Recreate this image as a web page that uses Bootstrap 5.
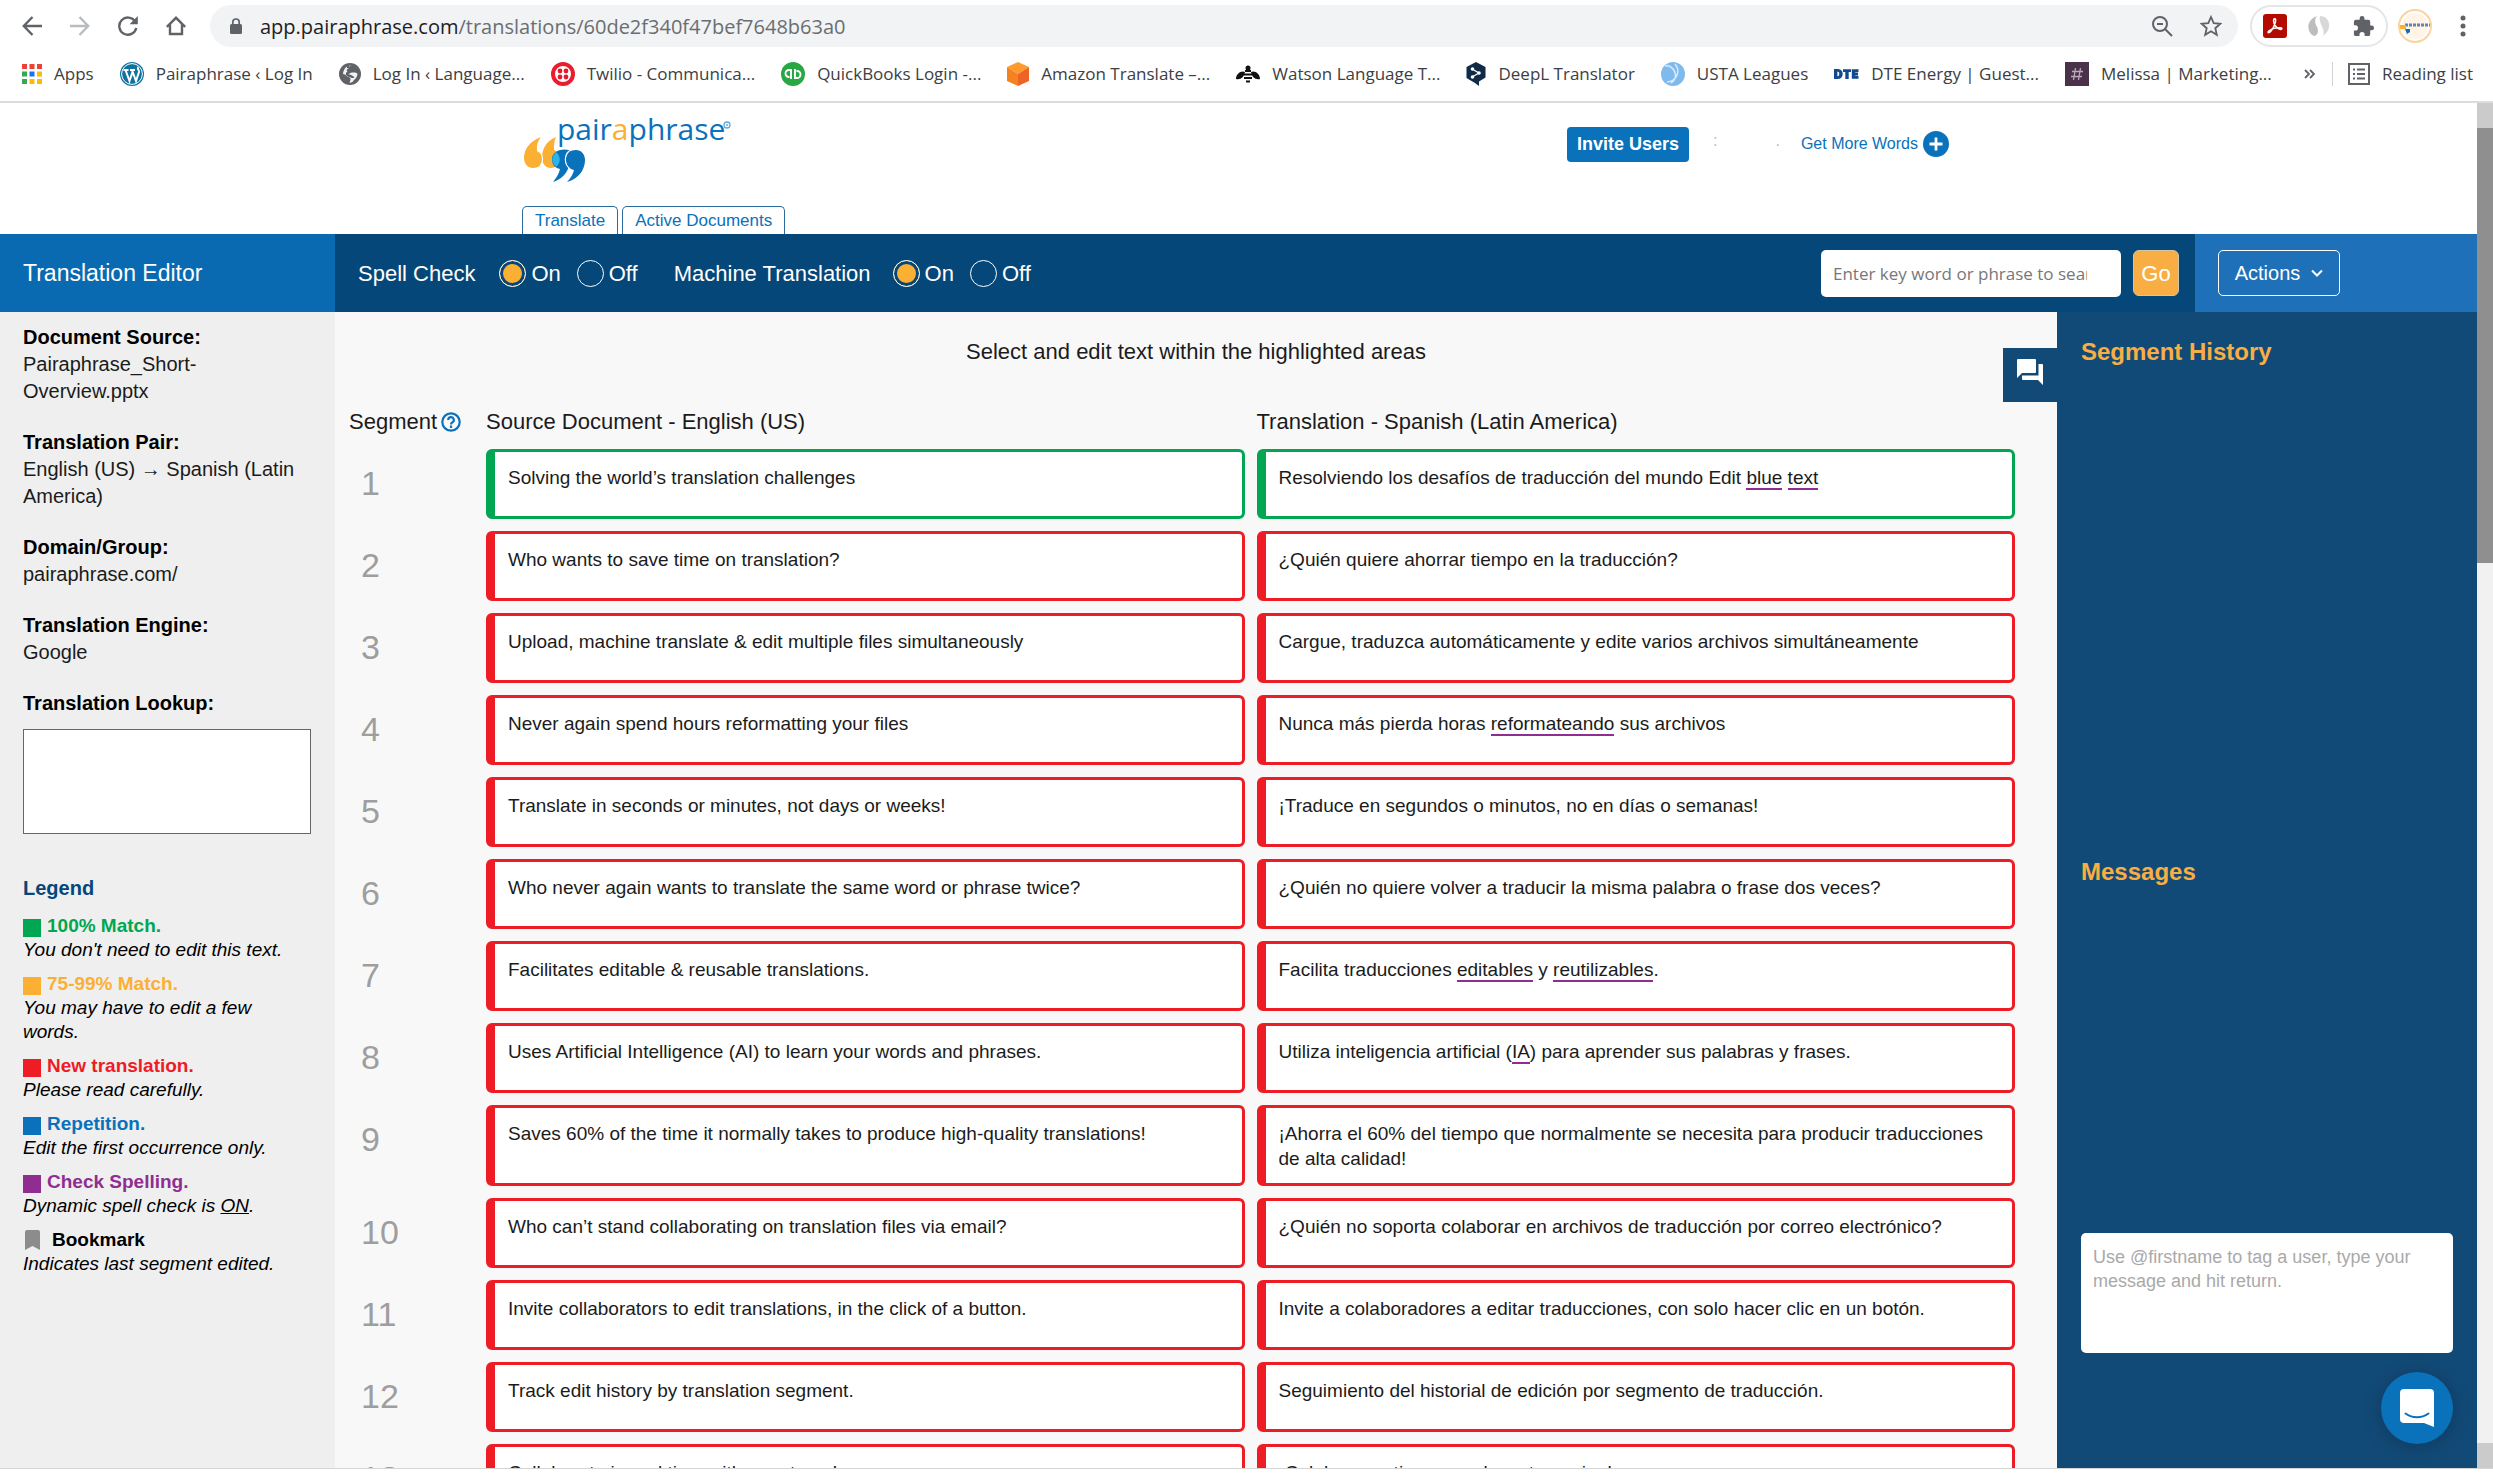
<!DOCTYPE html>
<html lang="en">
<head>
<meta charset="utf-8">
<meta name="viewport" content="width=device-width, initial-scale=1">
<title>Translation Editor</title>
<link href="https://cdn.jsdelivr.net/npm/bootstrap@5.3.0/dist/css/bootstrap.min.css" rel="stylesheet">
<style>
:root{--pp-blue:#0a71bb;--pp-navy:#054778;--pp-panel:#124a77;--pp-gold:#f9ae43;--pp-green:#00a651;--pp-red:#ee1c25;--pp-purple:#902d91}
body{height:100vh;overflow:hidden;font-family:"Liberation Sans",Arial,sans-serif;color:#1b1b1b;font-size:20px;line-height:27px;background:#fff}
a{text-decoration:none}
svg{display:block;flex:none}
/* browser frame */
.browser-ui{font-family:"Open Sans","Noto Sans",sans-serif;color:#3c4043;border-bottom:2px solid #dadce0}
.tool-row{height:52px;padding:0 27px 0 22px}
.nav-icons{gap:28px;width:188px}
.icon-btn{background:none;border:0;padding:0;color:#5f6368}
.omnibox{height:42px;border-radius:21px;background:#f1f3f4;padding:0 16px 0 20px}
.url-text{font-size:20px;color:#6a6e72;margin-left:18px}
.url-text b{font-weight:400;color:#202124}
.zoom-btn{margin-right:27px}
.ext-pill{height:42px;width:138px;border:2px solid #e3e5e8;border-radius:21px;margin-left:12px}
.book-row{height:49px;padding:0 20px 6px 22px;font-size:17px;line-height:24px}
.book-row a{color:#3c4043;gap:12px;white-space:nowrap}
.book-list{gap:26px}
.book-end{border-left:1px solid #cfd1d4;height:24px;padding-left:15px;margin-left:17px}
/* site header */
.site-head{height:131px}
.head-inner{width:58%;max-width:1433px}
.logo-box{height:103px;padding:6px 0 0 2px}
.brand-word{font-family:"Open Sans","Noto Sans",sans-serif;font-size:30px}
.tab-link{border:1px solid #2a6c9c;border-bottom-color:#8c8c8c;border-radius:5px 5px 0 0;color:var(--pp-blue);font-size:17px;line-height:27px;height:29px;padding:0 12px;background:#fff}
.head-tools{padding:24px 6px 0 0}
.invite-btn{background:var(--pp-blue);color:#fff;font-weight:700;font-size:18px;line-height:35px;height:35px;padding:0 10px;border:0;border-radius:4px}
.faint-mark{color:#9cc3df;font-size:16px}
.faint-mark+.faint-mark{margin-left:58px}
.words-link{color:var(--pp-blue);font-size:16px;gap:5px;margin:3px 0 0 21px}
/* title bar */
.title-bar{height:78px;background:var(--pp-navy);color:#fff}
.side-w{width:335px;flex:none}
.bar-title{background:#0a6ab1;font-size:23px;padding-left:23px}
.bar-controls{font-size:22px;padding:0 16px 0 23px}
.bar-controls label{margin-right:16px}
.mt-label{margin:0 22px 0 20px}
.radio-dot{appearance:none;width:27px;height:27px;border:1px solid #fff;border-radius:50%;margin:0 5px 0 0;background:var(--pp-navy)}
.radio-dot:checked{background:#fbb034;box-shadow:inset 0 0 0 3px var(--pp-navy)}
.search-box{width:300px;height:47px;border:0;border-radius:5px;background:#fff;padding:0 34px 0 12px;font:17px "Open Sans",sans-serif;color:#555}
.search-box::placeholder{color:#777}
.go-btn{width:46px;height:46px;border:1px solid #d5c4a8;border-radius:6px;background:#f9ae43;color:#fff;font-size:22px;padding:0;margin-left:12px}
.bar-actions{width:282px;background:#1e70b9;padding-left:23px;flex:none}
.action-btn{width:122px;height:46px;border:1px solid #fff;border-radius:5px;background:none;color:#fff;font-size:20px;padding:0;gap:11px}
/* sidebar */
.info-side{background:#efefef;padding:12px 24px 0 23px}
.info-side h2{font-size:20px;line-height:27px;font-weight:700;margin:0;color:#000}
.info-side h2.legend-title{color:var(--pp-navy);margin-top:41px}
.info-side dl,.info-side dd{margin:0}
.info-side dt{color:#000;font-weight:700}
.info-side dd{margin-bottom:24px}
.lookup-box{width:100%;height:105px;border:1px solid #666;background:#fff;margin-top:12px;resize:none;display:block}
.legend-list{font-size:19px;line-height:24px;color:#000;margin:12px 0 0}
.legend-list li{margin-bottom:10px}
.legend-list strong{display:flex;align-items:center;gap:6px}
.swatch{width:18px;height:18px;margin-top:4px;background:currentColor}
.tone-match{color:var(--pp-green)}
.tone-fuzzy{color:#fbb034}
.tone-new{color:var(--pp-red)}
.tone-repeat{color:var(--pp-blue)}
.tone-spell{color:var(--pp-purple)}
/* segments */
.edit-main{background:#f8f8f8;padding:26px 42px 0 0}
.hint-line{font-size:22px;padding-left:42px}
.seg-head{font-size:22px;margin-top:43px;margin-bottom:14px}
.seg-num{width:151px;flex:none;padding-left:26px;font-size:34px;line-height:68px;color:#9e9e9e}
.seg-head .seg-num{font-size:22px;line-height:27px;padding-left:14px;color:inherit}
.seg-cols{gap:12px}
.seg-cols>*{flex:1 1 0;min-width:0}
.seg-row{margin-bottom:12px}
.seg-cell{min-height:70px;border:3px solid var(--pp-red);border-left-width:9px;border-radius:6px;background:#fff;padding:13px 12px 12px 13px;font-size:19px;line-height:25px}
.seg-good .seg-cell{border-color:var(--pp-green)}
.misspelt{border-bottom:2px solid var(--pp-purple)}
.chat-tab{top:36px;right:0;width:54px;height:54px;background:var(--pp-panel);border:0;padding:0 14px 6px}
/* right panel */
.msg-panel{width:420px;flex:none;background:var(--pp-panel);padding:26px 24px 0}
.msg-panel h2{font-size:24px;line-height:28px;font-weight:700;color:#f9ae43;margin:0}
.hist-area{height:520px;flex:none}
.msg-area{height:375px;flex:none}
.msg-box{height:120px;border:0;border-radius:5px;padding:12px;font-size:18px;line-height:24px;resize:none;display:block}
.msg-box::placeholder{color:#a9a9a9}
.help-fab{right:24px;bottom:24px;width:72px;height:72px;border:0;border-radius:50%;background:var(--pp-blue);padding:0;box-shadow:0 2px 20px rgba(0,0,0,.22)}
.page-scroll{width:16px;flex:none;background:#f1f1f1}
.page-scroll .cap-end{height:25px;background:#cbcbcb}
.page-scroll .grip{height:435px;background:#8f8f8f}
.foot-edge{height:9px;border-top:1px solid #d5d5d5;flex:none}
</style>
<script src="https://cdn.jsdelivr.net/npm/bootstrap@5.3.0/dist/js/bootstrap.bundle.min.js"></script>
</head>
<body class="d-flex flex-column">

<header class="browser-ui flex-shrink-0">
  <div class="tool-row d-flex align-items-center">
    <div class="nav-icons d-flex">
      <button class="icon-btn" aria-label="Back"><svg width="20" height="20" viewBox="0 0 20 20" fill="none" stroke="currentColor" stroke-width="2.4"><path d="M20 10H2M10.500 1L1.800 10l8.700 9"/></svg></button>
      <button class="icon-btn" aria-label="Forward"><svg width="20" height="20" viewBox="0 0 20 20" fill="none" stroke="#b9bcbf" stroke-width="2.4"><path d="M0 10h18M9.500 1l8.700 9-8.700 9"/></svg></button>
      <button class="icon-btn" aria-label="Reload"><svg width="20" height="20" viewBox="0 0 20 20" fill="none" stroke="currentColor" stroke-width="2.400"><path d="M17.200 5.600A8.600 8.600 0 1 0 18.300 12"/><path d="M19.800 0v8.200h-8.200z" fill="currentColor" stroke="none"/></svg></button>
      <button class="icon-btn" aria-label="Home"><svg width="20" height="20" viewBox="0 0 20 20" fill="none" stroke="currentColor" stroke-width="2.400"><path d="M.8 10.800L10 1.800l9.200 9M4 8.500V18h12V8.500"/></svg></button>
    </div>
    <div class="omnibox d-flex align-items-center flex-fill">
      <svg width="12" height="16" viewBox="0 0 12 16"><rect y="6" width="12" height="10" rx="1.500" fill="#5f6368"/><path d="M2.800 7V4.200a3.200 3.200 0 0 1 6.400 0V7" fill="none" stroke="#5f6368" stroke-width="1.700"/></svg>
      <span class="url-text flex-fill"><b>app.pairaphrase.com</b>/translations/60de2f340f47bef7648b63a0</span>
      <button class="icon-btn zoom-btn" aria-label="Zoom"><svg width="22" height="22" viewBox="0 0 22 22" fill="none" stroke="currentColor" stroke-width="2"><circle cx="9" cy="9" r="7"/><path d="M14 14l7 7M6 9h6"/></svg></button>
      <button class="icon-btn" aria-label="Bookmark this page"><svg width="22" height="22" viewBox="0 0 22 22" fill="none" stroke="currentColor" stroke-width="1.800"><path d="M11 2l2.700 6.200 6.700.6-5.100 4.400 1.500 6.600L11 16.300l-5.800 3.500 1.500-6.600-5.100-4.400 6.700-.6z"/></svg></button>
    </div>
    <div class="ext-pill d-flex align-items-center justify-content-around">
      <svg width="24" height="24" viewBox="0 0 24 24"><rect width="24" height="24" rx="3" fill="#b30b00"/><path d="M11 5c2-1 2 2 1 4.500-1.200 3.500-3.500 7.500-5.500 9-1.500 1-2-.5-.5-1.700 2.500-2 8-3.300 11.500-3 2 .2 1.800 1.700 0 1.700C14 15.500 10.500 10 10.500 6.500z" fill="none" stroke="#fff" stroke-width="1.500"/></svg>
      <svg width="22" height="22" viewBox="0 0 22 22"><path d="M9 1C-2 5-2 17 6 21c4-1 5-5 3-9s-3-7 0-11z" fill="#bdbdbd"/><path d="M12 1c10 0 13 13 3 20 3-7-5-12-3-20z" fill="#d8d8d8"/></svg>
      <svg width="23" height="23" viewBox="0 0 24 24" fill="#5f6368"><path d="M20.500 11H19V7a2 2 0 0 0-2-2h-4V3.500a2.500 2.500 0 0 0-5 0V5H4a2 2 0 0 0-2 2v3.800h1.500a2.700 2.700 0 0 1 0 5.400H2V20a2 2 0 0 0 2 2h3.800v-1.500a2.700 2.700 0 0 1 5.400 0V22H17a2 2 0 0 0 2-2v-4h1.500a2.500 2.500 0 0 0 0-5z"/></svg>
    </div>
    <svg class="ms-2 me-4" width="36" height="34" viewBox="0 0 36 34"><circle cx="19" cy="17" r="16" fill="#fff" stroke="#fbd3a1" stroke-width="2"/><circle cx="19" cy="17" r="13" fill="#fff4e6"/><path d="M9 16h25" stroke="#5b86b5" stroke-width="3" stroke-dasharray="3 1"/><path d="M4 18h6" stroke="#fbb034" stroke-width="4"/><path d="M9 20h5v3l-3 2" fill="#0a71bb"/></svg>
    <button class="icon-btn ms-1" aria-label="Menu"><svg width="6" height="22" viewBox="0 0 6 22" fill="currentColor"><circle cx="3" cy="3" r="2.500"/><circle cx="3" cy="11" r="2.500"/><circle cx="3" cy="19" r="2.500"/></svg></button>
  </div>
  <nav class="book-row d-flex align-items-center" aria-label="Bookmarks">
    <div class="book-list d-flex align-items-center flex-fill">
      <a href="#" class="d-flex align-items-center"><svg width="20" height="20" viewBox="0 0 20 20"><path d="M0 0h5v5H0zM7.500 0h5v5h-5zM15 0h5v5h-5z" fill="#ea4335"/><path d="M0 7.500h5v5H0zM0 15h5v5H0z" fill="#34a853"/><path d="M7.500 7.500h5v5h-5z" fill="#1a73e8"/><path d="M15 7.500h5v5h-5zM7.500 15h5v5h-5zM15 15h5v5h-5z" fill="#fbbc04"/></svg>Apps</a>
      <a href="#" class="d-flex align-items-center"><svg width="24" height="24" viewBox="0 0 24 24"><circle cx="12" cy="12" r="12" fill="#0f71a0"/><circle cx="12" cy="12" r="10.400" fill="none" stroke="#fff" stroke-width="1"/><path d="M3.500 8h5M10 8h5M5.500 8l4 11 3-9M12 8l4 11 3-9c.5-2-2-3-1-5" fill="none" stroke="#fff" stroke-width="2"/></svg>Pairaphrase ‹ Log In</a>
      <a href="#" class="d-flex align-items-center"><svg width="22" height="22" viewBox="0 0 22 22"><circle cx="11" cy="11" r="11" fill="#5f6368"/><path d="M12 2.500c-2 1.500-1 3-3 3.500-2.500.5-1 3 1 3.500 3 .5 7-1 8.500 1.500-.5 4-3 5-5 8l-3 1c1-3 2-5-1-6-2-.5-2.500-2.500-5.500-3C4.500 6 7 3 12 2.500z" fill="#fff" opacity=".92"/><path d="M8 4c3 0 5 2 4 4s-4 1-4 3 6 2 6 4" fill="none" stroke="#5f6368" stroke-width="2.500"/></svg>Log In ‹ Language...</a>
      <a href="#" class="d-flex align-items-center"><svg width="24" height="24" viewBox="0 0 24 24"><circle cx="12" cy="12" r="10" fill="#fff" stroke="#ea1c2d" stroke-width="4"/><g fill="#e01b2b"><circle cx="9" cy="9" r="2.400"/><circle cx="15" cy="9" r="2.400"/><circle cx="9" cy="15" r="2.400"/><circle cx="15" cy="15" r="2.400"/></g></svg>Twilio - Communica...</a>
      <a href="#" class="d-flex align-items-center"><svg width="24" height="24" viewBox="0 0 24 24"><circle cx="12" cy="12" r="12" fill="#28a745"/><path d="M10 17V8H8a3.500 3.500 0 0 0 0 7h.5M14 7v9h2a3.500 3.500 0 0 0 0-7h-.5" fill="none" stroke="#fff" stroke-width="1.900"/></svg>QuickBooks Login -...</a>
      <a href="#" class="d-flex align-items-center"><svg width="22" height="24" viewBox="1 0 22 24"><path d="M12 0l11 5-11 7L1 5z" fill="#ff9a2e"/><path d="M1 5l11 7v12L1 19z" fill="#f58220"/><path d="M23 5l-11 7v12l11-5z" fill="#ee6424"/></svg>Amazon Translate –...</a>
      <a href="#" class="d-flex align-items-center"><svg width="24" height="20" viewBox="0 0 24 20"><path d="M9 8C5 6 0 10 0 15c5 1 8-2 9-7zM15 8c4-2 9 2 9 7-5 1-8-2-9-7z" fill="#111"/><path d="M9 7h6M8 10.500h8M8 14h8M10 17.500h4" stroke="#111" stroke-width="2"/><circle cx="12" cy="4" r="2.500" fill="#111"/></svg>Watson Language T...</a>
      <a href="#" class="d-flex align-items-center"><svg width="20" height="24" viewBox="1 0 20 24"><path d="M11 0l9.500 5v10.500L14 19.500V24l-4-3-8.500-5V5z" fill="#0f2b46"/><path d="M7 7l7 4-7 4" fill="none" stroke="#fff" stroke-width="1.300"/><g fill="#fff"><circle cx="7.500" cy="7" r="1.800"/><circle cx="14" cy="11" r="1.800"/><circle cx="7.500" cy="15" r="1.800"/></g></svg>DeepL Translator</a>
      <a href="#" class="d-flex align-items-center"><svg width="24" height="24" viewBox="0 0 24 24"><circle cx="12" cy="12" r="12" fill="#7fbaec"/><path d="M14 2c6 7 2 17-8 18M4 4c9-2 15 12 6 17" fill="none" stroke="#d7ebfb" stroke-width="1.500"/></svg>USTA Leagues</a>
      <a href="#" class="d-flex align-items-center"><svg width="25" height="10" viewBox="0 0 25 12" preserveAspectRatio="none" fill="none" stroke="#124a90" stroke-width="3.400"><path d="M1.700 1.700v8.600h2.300c4 0 4-8.600 0-8.600zM9 2h8M13 2v10M24.500 2h-5v8h5M19 6h5"/></svg>DTE Energy | Guest...</a>
      <a href="#" class="d-flex align-items-center"><svg width="24" height="24" viewBox="0 0 24 24"><path fill="#4a334a" d="M0 0h24v24H0z"/><path d="M10.500 6l-2 12M15.500 6l-2 12M7 9.500h11M6 14.500h11" stroke="#b9a9b9" stroke-width="1.300"/></svg>Melissa | Marketing...</a>
    </div>
    <svg width="11" height="10" viewBox="0 0 11 10" fill="none" stroke="#5f6368" stroke-width="1.800"><path d="M1 1l4 4-4 4M6 1l4 4-4 4"/></svg>
    <div class="book-end d-flex align-items-center">
      <a href="#" class="d-flex align-items-center"><svg width="22" height="22" viewBox="0 0 22 22" fill="none" stroke="#5f6368" stroke-width="2"><rect x="1" y="1" width="20" height="20"/><path d="M5 6.500h2M9 6.500h8M5 11h2M9 11h8M5 15.500h2M9 15.500h8"/></svg>Reading list</a>
    </div>
  </nav>
</header>

<div class="d-flex flex-fill overflow-hidden">
  <div class="d-flex flex-column flex-fill overflow-hidden">
    <header class="site-head flex-shrink-0">
      <div class="head-inner mx-auto d-flex justify-content-between">
        <div>
          <div class="logo-box">
            <svg width="210" height="80" viewBox="0 0 210 80" role="img" aria-label="pairaphrase">
              <g fill="#fbb034"><path d="M17 28C6 32 0 40 0 49c0 6 4 10 9 10 6 0 10-4 10-9 0-4-2-7-6-8 0-5 1-9 4-14z"/><path d="M32 28C22 32 18 40 18 49c0 6 4 10 9 10s9-4 9-9c0-4-2-8-6-9 0-5 0-9 2-13z"/></g>
              <g fill="#0a71bb"><path d="M45 41c-7-2-17 1-17 9 0 6 3 9 8 10-1 5-4 9-7 13 11-3 17-13 17-23 0-4 0-7-1-9z"/><path d="M52 41c-7 0-10 4-10 10 0 5 3 9 8 10-1 4-3 8-7 12 12-3 18-13 18-22 0-6-4-10-9-10z"/></g>
              <path d="M45 42c-5 5-5 13 1 18M17 29c-4 5-4 9-3 13 5 2 6 11 2 15" fill="none" stroke="#fff" stroke-width="1.200"/>
              <path d="M32 43c-5 4-5 11 0 15 5-4 5-11 0-15z" fill="#2cb4e8"/>
              <text class="brand-word" x="33" y="31" fill="#0a71bb">pair<tspan fill="#fbb034">a</tspan>phrase</text>
              <circle cx="203" cy="16" r="3" fill="none" stroke="#6aa7d4" stroke-width="1.300"/><circle cx="203" cy="16" r="1" fill="#6aa7d4"/>
            </svg>
          </div>
          <nav class="d-flex gap-1"><a href="#" class="tab-link">Translate</a><a href="#" class="tab-link">Active Documents</a></nav>
        </div>
        <div class="head-tools d-flex align-items-start">
          <button class="invite-btn">Invite Users</button>
          <span class="faint-mark ms-4" aria-hidden="true">:</span><span class="faint-mark" aria-hidden="true">.</span>
          <a href="#" class="words-link d-flex align-items-center">Get More Words
            <svg width="26" height="26" viewBox="0 0 26 26"><circle cx="13" cy="13" r="13" fill="#0a71bb"/><path d="M13 6.500v13M6.500 13h13" stroke="#fff" stroke-width="2.800"/></svg></a>
        </div>
      </div>
    </header>

    <div class="title-bar d-flex flex-shrink-0">
      <div class="bar-title side-w d-flex align-items-center">Translation Editor</div>
      <div class="bar-controls d-flex align-items-center flex-fill">
        <span class="me-4">Spell Check</span>
        <input class="radio-dot" type="radio" name="spell" id="spellOn" checked><label for="spellOn">On</label>
        <input class="radio-dot" type="radio" name="spell" id="spellOff"><label for="spellOff">Off</label>
        <span class="mt-label">Machine Translation</span>
        <input class="radio-dot" type="radio" name="mt" id="mtOn" checked><label for="mtOn">On</label>
        <input class="radio-dot" type="radio" name="mt" id="mtOff"><label for="mtOff">Off</label>
        <input class="search-box ms-auto" type="text" aria-label="Search" placeholder="Enter key word or phrase to search">
        <button class="go-btn">Go</button>
      </div>
      <div class="bar-actions d-flex align-items-center">
        <button class="action-btn d-flex align-items-center justify-content-center">Actions
          <svg width="12" height="9" viewBox="0 0 12 9" fill="none" stroke="#fff" stroke-width="2"><path d="M1 1.500l5 5 5-5"/></svg></button>
      </div>
    </div>

    <div class="d-flex flex-fill overflow-hidden">
      <aside class="info-side side-w">
        <dl>
          <dt>Document Source:</dt><dd>Pairaphrase_Short-<br>Overview.pptx</dd>
          <dt>Translation Pair:</dt><dd>English (US) → Spanish (Latin America)</dd>
          <dt>Domain/Group:</dt><dd>pairaphrase.com/</dd>
          <dt>Translation Engine:</dt><dd>Google</dd>
        </dl>
        <label class="fw-bold text-black d-block" for="lookup">Translation Lookup:</label>
        <textarea class="lookup-box" id="lookup"></textarea>
        <h2 class="legend-title">Legend</h2>
        <ul class="legend-list list-unstyled">
          <li><strong class="tone-match"><span class="swatch"></span>100% Match.</strong><em>You don't need to edit this text.</em></li>
          <li><strong class="tone-fuzzy"><span class="swatch"></span>75-99% Match.</strong><em>You may have to edit a few words.</em></li>
          <li><strong class="tone-new"><span class="swatch"></span>New translation.</strong><em>Please read carefully.</em></li>
          <li><strong class="tone-repeat"><span class="swatch"></span>Repetition.</strong><em>Edit the first occurrence only.</em></li>
          <li><strong class="tone-spell"><span class="swatch"></span>Check Spelling.</strong><em>Dynamic spell check is <u>ON</u>.</em></li>
          <li><strong><svg class="me-1" width="19" height="20" viewBox="0 0 19 20"><path d="M2 2a2 2 0 0 1 2-2h11a2 2 0 0 1 2 2v18l-7.500-4L2 20z" fill="#8c8c8c"/></svg>Bookmark</strong><em>Indicates last segment edited.</em></li>
        </ul>
      </aside>

      <main class="edit-main flex-fill overflow-hidden position-relative">
        <p class="hint-line text-center mb-0">Select and edit text within the highlighted areas</p>
        <button class="chat-tab position-absolute d-flex align-items-center" aria-label="Show messages"><svg width="26" height="26" viewBox="0 0 26 26" fill="#fff"><path d="M1 0h17a1 1 0 0 1 1 1v12a1 1 0 0 1-1 1H5l-5 5V1a1 1 0 0 1 1-1z"/><path d="M21.500 5H25a1 1 0 0 1 1 1v20l-5-5H6a1 1 0 0 1-1-1v-3.500h16.500z"/></svg></button>
        <div class="seg-head d-flex">
          <div class="seg-num d-flex align-items-center gap-1">Segment <svg width="20" height="20" viewBox="0 0 20 20" fill="none" stroke="#0a71bb" stroke-width="2.200"><circle cx="10" cy="10" r="8.700"/><path d="M7.200 8a2.800 2.800 0 1 1 4 2.500c-1 .5-1.200 1-1.200 2M10 13.500V16"/></svg></div>
          <div class="seg-cols d-flex flex-fill"><div>Source Document - English (US)</div><div>Translation - Spanish (Latin America)</div></div>
        </div>

        <div class="seg-row seg-good d-flex"><div class="seg-num">1</div><div class="seg-cols d-flex flex-fill"><div class="seg-cell">Solving the world’s translation challenges</div><div class="seg-cell">Resolviendo los desafíos de traducción del mundo Edit <span class="misspelt">blue</span> <span class="misspelt">text</span></div></div></div>
        <div class="seg-row d-flex"><div class="seg-num">2</div><div class="seg-cols d-flex flex-fill"><div class="seg-cell">Who wants to save time on translation?</div><div class="seg-cell">¿Quién quiere ahorrar tiempo en la traducción?</div></div></div>
        <div class="seg-row d-flex"><div class="seg-num">3</div><div class="seg-cols d-flex flex-fill"><div class="seg-cell">Upload, machine translate &amp; edit multiple files simultaneously</div><div class="seg-cell">Cargue, traduzca automáticamente y edite varios archivos simultáneamente</div></div></div>
        <div class="seg-row d-flex"><div class="seg-num">4</div><div class="seg-cols d-flex flex-fill"><div class="seg-cell">Never again spend hours reformatting your files</div><div class="seg-cell">Nunca más pierda horas <span class="misspelt">reformateando</span> sus archivos</div></div></div>
        <div class="seg-row d-flex"><div class="seg-num">5</div><div class="seg-cols d-flex flex-fill"><div class="seg-cell">Translate in seconds or minutes, not days or weeks!</div><div class="seg-cell">¡Traduce en segundos o minutos, no en días o semanas!</div></div></div>
        <div class="seg-row d-flex"><div class="seg-num">6</div><div class="seg-cols d-flex flex-fill"><div class="seg-cell">Who never again wants to translate the same word or phrase twice?</div><div class="seg-cell">¿Quién no quiere volver a traducir la misma palabra o frase dos veces?</div></div></div>
        <div class="seg-row d-flex"><div class="seg-num">7</div><div class="seg-cols d-flex flex-fill"><div class="seg-cell">Facilitates editable &amp; reusable translations.</div><div class="seg-cell">Facilita traducciones <span class="misspelt">editables</span> y <span class="misspelt">reutilizables</span>.</div></div></div>
        <div class="seg-row d-flex"><div class="seg-num">8</div><div class="seg-cols d-flex flex-fill"><div class="seg-cell">Uses Artificial Intelligence (AI) to learn your words and phrases.</div><div class="seg-cell">Utiliza inteligencia artificial (<span class="misspelt">IA</span>) para aprender sus palabras y frases.</div></div></div>
        <div class="seg-row d-flex"><div class="seg-num">9</div><div class="seg-cols d-flex flex-fill"><div class="seg-cell">Saves 60% of the time it normally takes to produce high-quality translations!</div><div class="seg-cell">¡Ahorra el 60% del tiempo que normalmente se necesita para producir traducciones de alta calidad!</div></div></div>
        <div class="seg-row d-flex"><div class="seg-num">10</div><div class="seg-cols d-flex flex-fill"><div class="seg-cell">Who can’t stand collaborating on translation files via email?</div><div class="seg-cell">¿Quién no soporta colaborar en archivos de traducción por correo electrónico?</div></div></div>
        <div class="seg-row d-flex"><div class="seg-num">11</div><div class="seg-cols d-flex flex-fill"><div class="seg-cell">Invite collaborators to edit translations, in the click of a button.</div><div class="seg-cell">Invite a colaboradores a editar traducciones, con solo hacer clic en un botón.</div></div></div>
        <div class="seg-row d-flex"><div class="seg-num">12</div><div class="seg-cols d-flex flex-fill"><div class="seg-cell">Track edit history by translation segment.</div><div class="seg-cell">Seguimiento del historial de edición por segmento de traducción.</div></div></div>
        <div class="seg-row d-flex"><div class="seg-num">13</div><div class="seg-cols d-flex flex-fill"><div class="seg-cell">Collaborate in real time with your team!</div><div class="seg-cell">¡Colabore en tiempo real con tu equipo!</div></div></div>
      </main>

      <aside class="msg-panel position-relative">
        <section class="hist-area"><h2>Segment History</h2></section>
        <section class="msg-area"><h2>Messages</h2></section>
        <textarea class="msg-box w-100" aria-label="Message" placeholder="Use @firstname to tag a user, type your message and hit return."></textarea>
        <button class="help-fab position-absolute d-flex align-items-center justify-content-center" aria-label="Open chat"><svg width="34" height="38" viewBox="0 0 34 38"><path d="M4 0h26a4 4 0 0 1 4 4v34l-10-4H4a4 4 0 0 1-4-4V4a4 4 0 0 1 4-4z" fill="#fff"/><path d="M5.500 24.500c7 5 16 5 23 0" fill="none" stroke="#0a71bb" stroke-width="2" stroke-linecap="round"/></svg></button>
      </aside>
    </div>
  </div>
  <div class="page-scroll d-flex flex-column" aria-hidden="true"><div class="cap-end"></div><div class="grip"></div><div class="cap-end mt-auto"></div></div>
</div>
<div class="foot-edge"></div>
</body>
</html>
